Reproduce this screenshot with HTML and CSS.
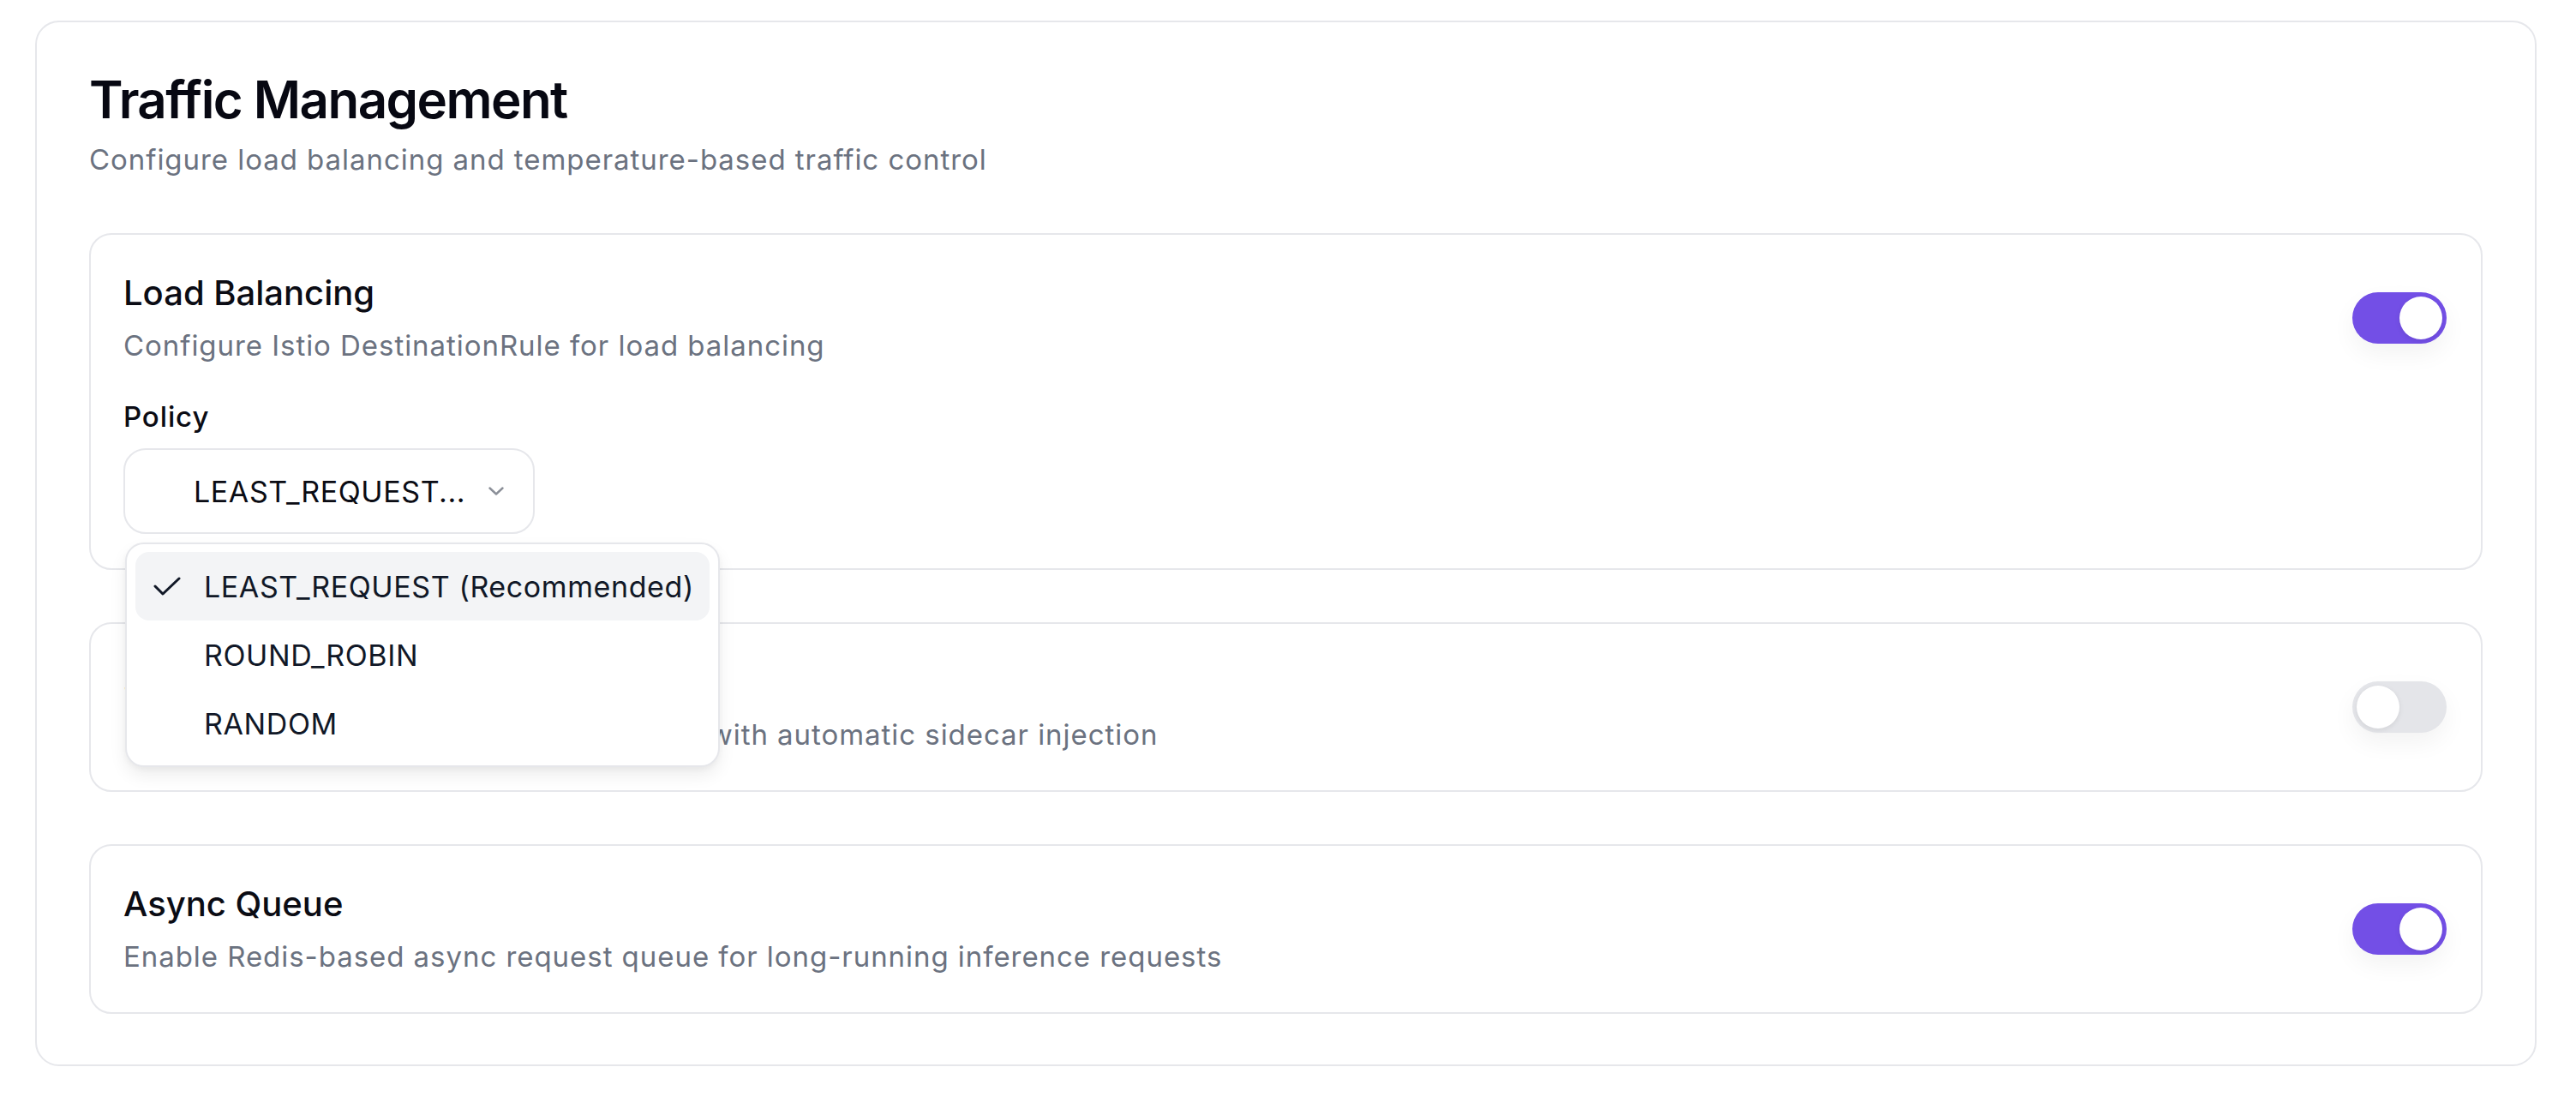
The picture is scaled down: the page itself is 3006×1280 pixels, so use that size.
FILE: index.html
```html
<!DOCTYPE html>
<html lang="en">
<head>
<meta charset="utf-8">
<title>Traffic Management</title>
<link rel="stylesheet" href="styles.css">
</head>
<body>
<section class="panel">
  <header class="panel-head">
    <h1 class="panel-title">Traffic Management</h1>
    <p class="panel-sub">Configure load balancing and temperature-based traffic control</p>
  </header>

  <div class="card">
    <div class="card-row">
      <div class="card-text">
        <h2 class="card-title">Load Balancing</h2>
        <p class="card-desc">Configure Istio DestinationRule for load balancing</p>
      </div>
      <span class="toggle toggle-on"><span class="knob"></span></span>
    </div>
    <div class="field">
      <div class="field-label">Policy</div>
      <div class="select-wrap">
        <button class="select" type="button">
          <span class="select-value">LEAST_REQUEST...</span>
          <svg class="chev" viewBox="0 0 18 10" width="18" height="10"><path d="M1.5 1.5 L9 8.5 L16.5 1.5" fill="none" stroke="currentColor" stroke-width="2.4" stroke-linecap="round" stroke-linejoin="round"/></svg>
        </button>
        <ul class="menu">
          <li class="menu-item active">
            <svg class="check" viewBox="0 0 32 22" width="32" height="22"><path d="M2 11 L11 20 L30 2" fill="none" stroke="currentColor" stroke-width="3" stroke-linecap="round" stroke-linejoin="round"/></svg>
            <span>LEAST_REQUEST (Recommended)</span>
          </li>
          <li class="menu-item"><span class="check-slot"></span><span>ROUND_ROBIN</span></li>
          <li class="menu-item"><span class="check-slot"></span><span>RANDOM</span></li>
        </ul>
      </div>
    </div>
  </div>

  <div class="card">
    <div class="card-row">
      <div class="card-text">
        <h2 class="card-title">Service Mesh</h2>
        <p class="card-desc">Run models inside the Istio service mesh with automatic sidecar injection</p>
      </div>
      <span class="toggle"><span class="knob"></span></span>
    </div>
  </div>

  <div class="card">
    <div class="card-row">
      <div class="card-text">
        <h2 class="card-title">Async Queue</h2>
        <p class="card-desc">Enable Redis-based async request queue for long-running inference requests</p>
      </div>
      <span class="toggle toggle-on"><span class="knob"></span></span>
    </div>
  </div>
</section>
</body>
</html>
```

FILE: styles.css
```css
* { box-sizing: border-box; }

html, body {
  margin: 0;
  background: #ffffff;
}

body {
  padding: 24px 46px 38px 41px;
  font-family: Inter, "Noto Sans", "Liberation Sans", sans-serif;
  color: #0b0c14;
}

.panel {
  border: 2px solid #e6e7eb;
  border-radius: 28px;
  padding: 54px 61px 59px 61px;
  display: flex;
  flex-direction: column;
  gap: 61px;
  background: #fff;
}

.panel-head { display: flex; flex-direction: column; gap: 9px; margin-bottom: 0; }

.panel-title {
  margin: 0;
  font-size: 60px;
  line-height: 72px;
  font-weight: 600;
  letter-spacing: -1.55px;
  color: #070812;
}

.panel-sub {
  margin: 0;
  font-size: 33px;
  line-height: 50px;
  letter-spacing: 0.95px;
  color: #6b7280;
}

.card {
  border: 2px solid #e6e7eb;
  border-radius: 26px;
  padding: 40px 40px 40px 38px;
}

.card-row {
  display: flex;
  align-items: center;
  justify-content: space-between;
  gap: 40px;
}

.card-text { display: flex; flex-direction: column; gap: 8px; }

.card-title {
  margin: 0;
  font-size: 40px;
  line-height: 56px;
  font-weight: 500;
  color: #0b0c14;
}

.card-desc {
  margin: 0;
  font-size: 33px;
  line-height: 50px;
  letter-spacing: 0.95px;
  color: #6b7280;
}

.toggle {
  flex: none;
  width: 110px;
  height: 60px;
  border-radius: 30px;
  background: #e4e5e9;
  padding: 5px;
  display: flex;
  justify-content: flex-start;
  box-shadow: 0 12px 28px rgba(0, 0, 0, 0.05);
}

.toggle-on {
  background: #734fe6;
  justify-content: flex-end;
}

.knob {
  width: 50px;
  height: 50px;
  border-radius: 50%;
  background: #fff;
  box-shadow: 0 2px 6px rgba(0, 0, 0, 0.08);
}

.field { margin-top: 33px; display: flex; flex-direction: column; gap: 12px; }

.field-label {
  font-size: 33px;
  line-height: 50px;
  font-weight: 500;
  letter-spacing: 0.9px;
  color: #0b0c14;
}

.select-wrap { position: relative; align-self: flex-start; }

.select {
  width: 480px;
  height: 100px;
  border: 2px solid #e6e7eb;
  border-radius: 26px;
  background: #fff;
  display: flex;
  align-items: center;
  padding: 0 0 0 80px;
  gap: 27px;
  font-family: inherit;
  font-size: 34px;
  letter-spacing: 0.6px;
  color: #0b0c14;
}

.select-value { white-space: nowrap; }

.chev { color: #8b8f98; }

.menu {
  position: absolute;
  z-index: 5;
  top: calc(100% + 10px);
  left: 2px;
  width: 694px;
  margin: 0;
  padding: 9px 10px;
  list-style: none;
  background: #fff;
  border: 2px solid #e6e7eb;
  border-radius: 22px;
  box-shadow: 0 10px 20px rgba(0, 0, 0, 0.07), 0 3px 6px rgba(0, 0, 0, 0.04);
}

.menu-item {
  height: 80px;
  display: flex;
  align-items: center;
  gap: 27px;
  padding-left: 21px;
  border-radius: 16px;
  font-size: 34px;
  letter-spacing: 0.6px;
  color: #111827;
}

.menu-item.active { background: #f3f4f6; }

.check, .check-slot { flex: none; width: 32px; height: 22px; color: #111827; }
```
